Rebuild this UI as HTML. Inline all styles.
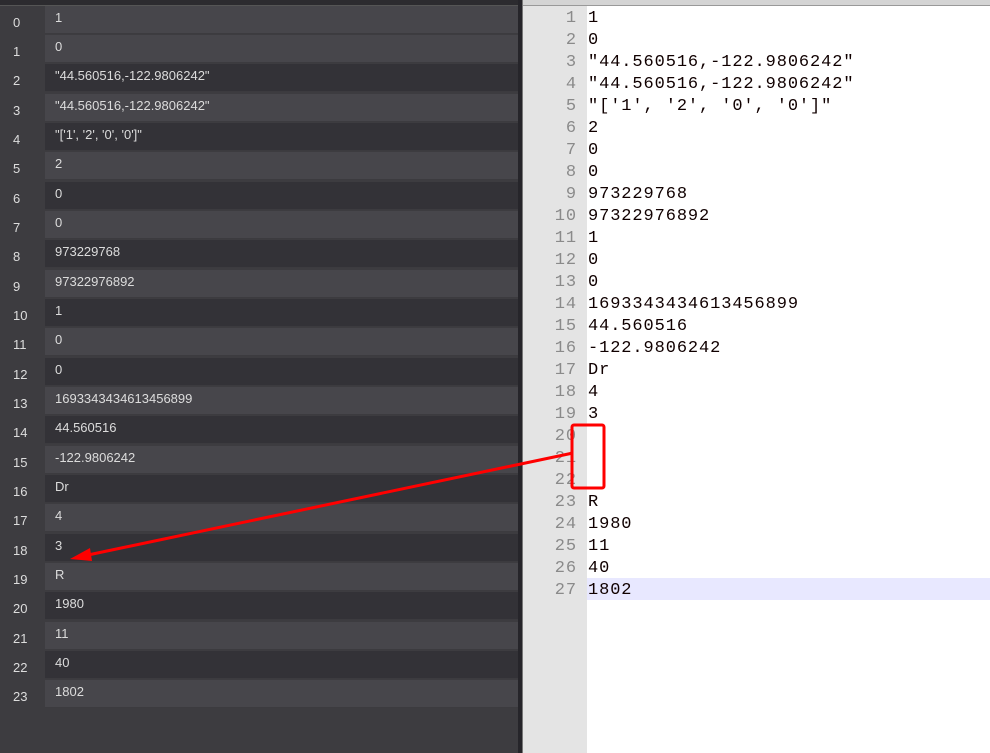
<!DOCTYPE html>
<html><head><style>
body{margin:0;width:990px;height:753px;overflow:hidden;position:relative;background:#3a393d;font-family:"Liberation Sans",sans-serif}
#top{position:absolute;left:0;top:0;width:522px;height:5px;background:#2c2b2f;border-bottom:1px solid #555}
#left{position:absolute;left:0;top:6px;width:518px;height:747px;background:#3d3c40}
.r{position:absolute;left:0;width:518px;height:29px}
.r .n{position:absolute;left:0;width:45px;height:29px;color:#ddd;font-size:13px;padding-left:13px;box-sizing:border-box;line-height:33px}
.r .c{position:absolute;left:45px;width:473px;height:28px;background:#47464b;border-bottom:1px solid #3c3b3f;color:#dcdcdc;font-size:13px;line-height:24px;padding-left:10px;box-sizing:border-box}
.r.d .c{background:#333237}
#sep{position:absolute;left:518px;top:0;width:4px;height:753px;background:#26252a;border-right:1px solid #777}
#right{position:absolute;left:523px;top:0;width:467px;height:753px;background:#fff}
#rtop{position:absolute;left:523px;top:0;width:467px;height:5px;background:#d4d4d4;border-bottom:1px solid #999}
#gut{position:absolute;left:523px;top:6px;width:64px;height:747px;background:#e4e4e4}
.l{position:absolute;left:523px;height:22px;font-family:"Liberation Mono",monospace;font-size:17px;line-height:22px;letter-spacing:0.9px}
.l .g{display:inline-block;width:54px;text-align:right;color:#8a8a8a}
.l .t{position:absolute;left:65px;color:#100000;white-space:pre}
#hl{position:absolute;left:587px;top:578px;width:403px;height:22px;background:#e8e8ff}
#lines{position:absolute;left:0;top:3px}
</style></head><body>
<div id="left">
<div class="r" style="top:0"><div class="n">0</div><div class="c">1</div></div>
<div class="r" style="top:29px"><div class="n">1</div><div class="c">0</div></div>
<div class="r d" style="top:58px"><div class="n">2</div><div class="c">"44.560516,-122.9806242"</div></div>
<div class="r" style="top:88px"><div class="n">3</div><div class="c">"44.560516,-122.9806242"</div></div>
<div class="r d" style="top:117px"><div class="n">4</div><div class="c">"['1', '2', '0', '0']"</div></div>
<div class="r" style="top:146px"><div class="n">5</div><div class="c">2</div></div>
<div class="r d" style="top:176px"><div class="n">6</div><div class="c">0</div></div>
<div class="r" style="top:205px"><div class="n">7</div><div class="c">0</div></div>
<div class="r d" style="top:234px"><div class="n">8</div><div class="c">973229768</div></div>
<div class="r" style="top:264px"><div class="n">9</div><div class="c">97322976892</div></div>
<div class="r d" style="top:293px"><div class="n">10</div><div class="c">1</div></div>
<div class="r" style="top:322px"><div class="n">11</div><div class="c">0</div></div>
<div class="r d" style="top:352px"><div class="n">12</div><div class="c">0</div></div>
<div class="r" style="top:381px"><div class="n">13</div><div class="c">1693343434613456899</div></div>
<div class="r d" style="top:410px"><div class="n">14</div><div class="c">44.560516</div></div>
<div class="r" style="top:440px"><div class="n">15</div><div class="c">-122.9806242</div></div>
<div class="r d" style="top:469px"><div class="n">16</div><div class="c">Dr</div></div>
<div class="r" style="top:498px"><div class="n">17</div><div class="c">4</div></div>
<div class="r d" style="top:528px"><div class="n">18</div><div class="c">3</div></div>
<div class="r" style="top:557px"><div class="n">19</div><div class="c">R</div></div>
<div class="r d" style="top:586px"><div class="n">20</div><div class="c">1980</div></div>
<div class="r" style="top:616px"><div class="n">21</div><div class="c">11</div></div>
<div class="r d" style="top:645px"><div class="n">22</div><div class="c">40</div></div>
<div class="r" style="top:674px"><div class="n">23</div><div class="c">1802</div></div>
</div>
<div id="top"></div>
<div id="sep"></div>
<div id="right"></div>
<div id="rtop"></div>
<div id="gut"></div>
<div id="hl"></div>
<div id="lines">
<div class="l" style="top:5px"><span class="g">1</span><span class="t">1</span></div>
<div class="l" style="top:27px"><span class="g">2</span><span class="t">0</span></div>
<div class="l" style="top:49px"><span class="g">3</span><span class="t">"44.560516,-122.9806242"</span></div>
<div class="l" style="top:71px"><span class="g">4</span><span class="t">"44.560516,-122.9806242"</span></div>
<div class="l" style="top:93px"><span class="g">5</span><span class="t">"['1', '2', '0', '0']"</span></div>
<div class="l" style="top:115px"><span class="g">6</span><span class="t">2</span></div>
<div class="l" style="top:137px"><span class="g">7</span><span class="t">0</span></div>
<div class="l" style="top:159px"><span class="g">8</span><span class="t">0</span></div>
<div class="l" style="top:181px"><span class="g">9</span><span class="t">973229768</span></div>
<div class="l" style="top:203px"><span class="g">10</span><span class="t">97322976892</span></div>
<div class="l" style="top:225px"><span class="g">11</span><span class="t">1</span></div>
<div class="l" style="top:247px"><span class="g">12</span><span class="t">0</span></div>
<div class="l" style="top:269px"><span class="g">13</span><span class="t">0</span></div>
<div class="l" style="top:291px"><span class="g">14</span><span class="t">1693343434613456899</span></div>
<div class="l" style="top:313px"><span class="g">15</span><span class="t">44.560516</span></div>
<div class="l" style="top:335px"><span class="g">16</span><span class="t">-122.9806242</span></div>
<div class="l" style="top:357px"><span class="g">17</span><span class="t">Dr</span></div>
<div class="l" style="top:379px"><span class="g">18</span><span class="t">4</span></div>
<div class="l" style="top:401px"><span class="g">19</span><span class="t">3</span></div>
<div class="l" style="top:423px"><span class="g">20</span></div>
<div class="l" style="top:445px"><span class="g">21</span></div>
<div class="l" style="top:467px"><span class="g">22</span></div>
<div class="l" style="top:489px"><span class="g">23</span><span class="t">R</span></div>
<div class="l" style="top:511px"><span class="g">24</span><span class="t">1980</span></div>
<div class="l" style="top:533px"><span class="g">25</span><span class="t">11</span></div>
<div class="l" style="top:555px"><span class="g">26</span><span class="t">40</span></div>
<div class="l" style="top:577px"><span class="g">27</span><span class="t">1802</span></div>
</div>
<svg style="position:absolute;left:0;top:0" width="990" height="753">
<rect x="572" y="425" width="32" height="63" rx="2" fill="none" stroke="#f00" stroke-width="3"/>
<line x1="573" y1="453" x2="88" y2="555" stroke="#f00" stroke-width="3"/>
<polygon points="70,559 90,548 92,561" fill="#f00"/>
</svg>
</body></html>
